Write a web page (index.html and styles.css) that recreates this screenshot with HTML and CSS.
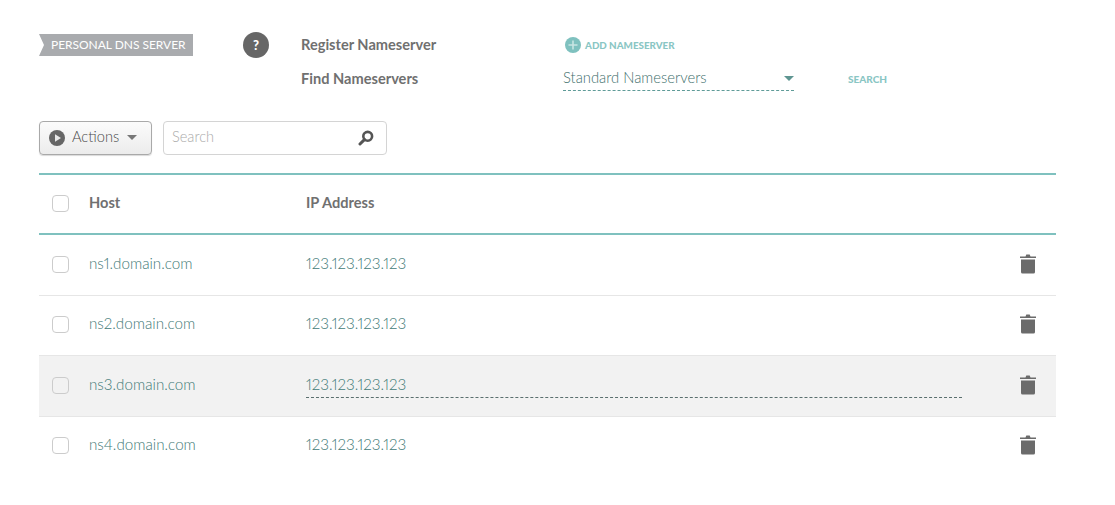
FILE: index.html
```html
<!DOCTYPE html>
<html lang="en">
<head>
<meta charset="utf-8">
<title>Personal DNS Server</title>
<link rel="stylesheet" href="styles.css">
</head>
<body>
<main class="page">
  <section class="top">
    <div class="tag">PERSONAL DNS SERVER</div>
    <div class="help">?</div>
    <div class="labels">
      <div class="label">Register Nameserver</div>
      <div class="label">Find Nameservers</div>
    </div>
    <div class="controls">
      <a class="add">
        <svg class="add-icon" viewBox="0 0 16 16" width="16" height="16"><circle cx="8" cy="8" r="8" fill="#7fc1bf"/><path d="M8 3.5v9M3.5 8h9" stroke="#c9e5e3" stroke-width="1.6"/></svg>
        <span>ADD NAMESERVER</span>
      </a>
      <div class="find-row">
        <div class="select"><span>Standard Nameservers</span><i class="select-caret"></i></div>
        <a class="search-link">SEARCH</a>
      </div>
    </div>
  </section>

  <section class="toolbar">
    <button class="actions">
      <svg viewBox="0 0 16 16" width="16" height="16"><circle cx="8" cy="8" r="8" fill="#666"/><path d="M6 4.2v7.6L12 8z" fill="#e8e8e8"/></svg>
      <span>Actions</span>
      <i class="actions-caret"></i>
    </button>
    <div class="searchbox">
      <span class="placeholder">Search</span>
      <svg viewBox="0 0 16 16" width="16" height="16"><circle cx="9.7" cy="6.3" r="4.4" fill="none" stroke="#555" stroke-width="2.6"/><path d="M6.4 9.6L2 14" stroke="#555" stroke-width="3" stroke-linecap="round"/></svg>
    </div>
  </section>

  <section class="table">
    <div class="row head">
      <i class="check"></i><div class="host">Host</div><div class="ip">IP Address</div>
    </div>
    <div class="row">
      <i class="check"></i><div class="host">ns1.domain.com</div><div class="ip"><span>123.123.123.123</span></div>
      <svg class="trash" viewBox="0 0 16 20" width="16" height="20"><path d="M5.5 2.4L6.3.6h3.4l.8 1.8H16v1.5H0V2.4z" fill="#6b6b6b"/><path d="M1 5.4h14V18a1.5 1.5 0 0 1-1.5 1.5h-11A1.5 1.5 0 0 1 1 18z" fill="#6b6b6b"/></svg>
    </div>
    <div class="row">
      <i class="check"></i><div class="host">ns2.domain.com</div><div class="ip"><span>123.123.123.123</span></div>
      <svg class="trash" viewBox="0 0 16 20" width="16" height="20"><path d="M5.5 2.4L6.3.6h3.4l.8 1.8H16v1.5H0V2.4z" fill="#6b6b6b"/><path d="M1 5.4h14V18a1.5 1.5 0 0 1-1.5 1.5h-11A1.5 1.5 0 0 1 1 18z" fill="#6b6b6b"/></svg>
    </div>
    <div class="row active">
      <i class="check"></i><div class="host">ns3.domain.com</div><div class="ip editing"><span>123.123.123.123</span></div>
      <svg class="trash" viewBox="0 0 16 20" width="16" height="20"><path d="M5.5 2.4L6.3.6h3.4l.8 1.8H16v1.5H0V2.4z" fill="#6b6b6b"/><path d="M1 5.4h14V18a1.5 1.5 0 0 1-1.5 1.5h-11A1.5 1.5 0 0 1 1 18z" fill="#6b6b6b"/></svg>
    </div>
    <div class="row last">
      <i class="check"></i><div class="host">ns4.domain.com</div><div class="ip"><span>123.123.123.123</span></div>
      <svg class="trash" viewBox="0 0 16 20" width="16" height="20"><path d="M5.5 2.4L6.3.6h3.4l.8 1.8H16v1.5H0V2.4z" fill="#6b6b6b"/><path d="M1 5.4h14V18a1.5 1.5 0 0 1-1.5 1.5h-11A1.5 1.5 0 0 1 1 18z" fill="#6b6b6b"/></svg>
    </div>
  </section>
</main>
</body>
</html>
```
FILE: styles.css
```css
* { box-sizing: border-box; }
html, body { margin: 0; padding: 0; background: #fff; }
body { font-family: "Lato", "Open Sans", sans-serif; color: #666; font-size: 14px; font-variant-numeric: proportional-nums; }
.page { width: 1095px; height: 505px; padding: 32px 39px 0; overflow: hidden; }

.top { display: flex; align-items: flex-start; height: 68px; }
.tag {
  width: 154px; height: 22px; margin-top: 2px; padding-left: 12px;
  background: #a9abae; color: #fff; font-size: 12px; font-weight: 400; line-height: 22px; letter-spacing: -.03px;
  clip-path: polygon(0 0, 100% 0, 100% 100%, 0 100%, 5px 50%);
}
.help {
  width: 26px; height: 26px; margin-left: 50px; border-radius: 50%;
  background: #666; color: #fff; font-weight: 900; font-size: 13px;
  line-height: 26px; text-align: center;
}
.labels { margin-left: 32px; width: 262px; }
.label { font-weight: 700; font-size: 14.6px; line-height: 20px; height: 34px; padding-top: 3px; color: #707070; }
.controls { display: flex; flex-direction: column; }
.add { display: flex; align-items: center; gap: 4px; margin-left: 2px; height: 26px; color: #8ac6c4; font-size: 9.8px; font-weight: 900; }
.find-row { display: flex; align-items: flex-start; margin-top: 8px; }
.select {
  width: 231px; height: 25px; padding-top: 1px; display: flex; justify-content: space-between;
  border-bottom: 1px dashed #5e9b98; color: #42706d; font-size: 14.8px; font-weight: 300; line-height: 20px;
}
.select-caret {
  width: 0; height: 0; margin: 9px 0 0 0;
  border-left: 5px solid transparent; border-right: 5px solid transparent; border-top: 5px solid #5e9591;
}
.search-link { margin-left: 54px; margin-top: 6px; color: #8ac6c4; font-size: 10px; font-weight: 900; line-height: 14px; }

.toolbar { display: flex; gap: 11px; height: 34px; margin-top: 21px; }
.actions {
  width: 113px; height: 34px; padding: 0 0 3px 9px; display: flex; align-items: center;
  border: 1px solid #a9a9a9; border-radius: 4px; background: linear-gradient(#fbfbfb, #ececec);
  box-shadow: 0 1px 1px rgba(0,0,0,.15);
  font: inherit; font-size: 14.6px; font-weight: 300; color: #4a4a4a;
}
.actions svg { margin-top: 3px; }
.actions span { margin-left: 7px; }
.actions-caret {
  width: 0; height: 0; margin: 2px 0 0 8px;
  border-left: 5px solid transparent; border-right: 5px solid transparent; border-top: 5px solid #777;
}
.searchbox {
  width: 224px; height: 34px; padding: 0 12px 0 8px; display: flex; align-items: center; justify-content: space-between;
  border: 1px solid #d4d4d4; border-radius: 4px; color: #aaa; font-size: 14.6px; font-weight: 300;
}
.placeholder { margin-top: -4px; }

.table { margin-top: 18px; width: 1017px; border-top: 2px solid #7fc1bf; }
.row { display: flex; align-items: center; height: 60.5px; border-bottom: 1px solid #e6e6e6; padding-left: 13px; color: #3f7a77; font-size: 15.2px; font-weight: 300; }
.row.head { height: 60px; border-bottom: 2px solid #7fc1bf; color: #707070; font-weight: 700; font-size: 14.6px; }
.row.active { background: #f2f2f2; }
.row.last { border-bottom-color: transparent; }
.check { width: 17px; height: 17px; margin-bottom: 1px; border: 1px solid #ccc; border-radius: 4px; background: #fff; flex: none; }
.active .check { background: #f2f2f2; }
.host { width: 217px; margin-left: 20px; flex: none; padding-bottom: 4px; }
.ip { width: 656px; flex: none; padding-bottom: 4px; }
.ip span { display: block; line-height: 20px; }
.editing { padding-bottom: 0; }
.editing span { border-bottom: 1px dashed #5a6f6e; padding-bottom: 3px; margin-top: 0; }
.trash { margin: 0 0 2px 58px; flex: none; }
```
